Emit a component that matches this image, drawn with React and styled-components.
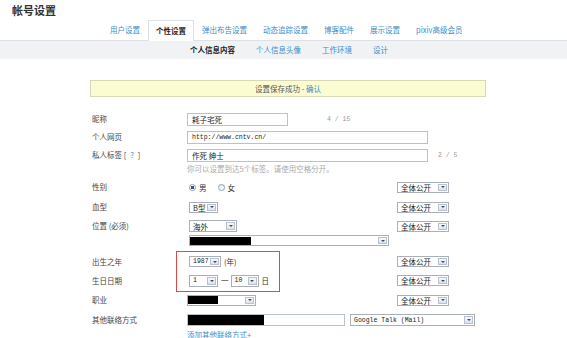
import React from "react";
import styled, { createGlobalStyle } from "styled-components";

const Global = createGlobalStyle`
  html, body { margin: 0; padding: 0; background: #fff; }
  body {
    font-family: "Noto Sans CJK SC", "Noto Sans", sans-serif;
    color: #444;
    width: 567px;
    height: 338px;
    overflow: hidden;
  }
`;

const Page = styled.div`
  width: 567px;
  height: 338px;
  overflow: hidden;
`;

const Title = styled.h1`
  margin: 0;
  padding: 3px 0 0 12px;
  height: 14px;
  font-size: 11px;
  line-height: 14px;
  font-weight: bold;
  color: #333;
`;

const TabBar = styled.div`
  display: flex;
  margin-top: 3px;
  padding-left: 102px;
  height: 20px;
  position: relative;
  z-index: 1;
`;

const Tab = styled.div`
  font-size: 7.5px;
  line-height: 19px;
  padding: 0 ${(p) => (p.$active ? "7px" : "8px")};
  color: ${(p) => (p.$active ? "#222" : "#3c8dc8")};
  font-weight: ${(p) => (p.$active ? "bold" : "normal")};
  background: ${(p) => (p.$active ? "#fff" : "transparent")};
  border: ${(p) => (p.$active ? "1px solid #dde0e4" : "none")};
  border-bottom: none;
  height: ${(p) => (p.$active ? "21px" : "20px")};
  box-sizing: border-box;
  white-space: nowrap;
`;

const SubBar = styled.div`
  display: flex;
  gap: 21px;
  padding-left: 190px;
  height: 19px;
  background: #f1f2f4;
  border-top: 1px solid #dde0e4;
  box-sizing: border-box;
  align-items: center;
`;

const SubTab = styled.div`
  font-size: 7.5px;
  line-height: 10px;
  color: ${(p) => (p.$active ? "#222" : "#3c8dc8")};
  font-weight: ${(p) => (p.$active ? "bold" : "normal")};
  white-space: nowrap;
`;

const Notice = styled.div`
  margin: 21px 0 0 90px;
  width: 396px;
  height: 17px;
  box-sizing: border-box;
  background: #fcfcd2;
  border: 1px solid #d9d8b4;
  font-size: 7.5px;
  line-height: 15px;
  text-align: center;
  color: #555;
`;

const Link = styled.span`
  color: #3c8dc8;
`;

const Form = styled.div`
  margin-top: 13px;
  padding-left: 92px;
  display: flex;
  flex-direction: column;
`;

const Row = styled.div`
  display: flex;
  align-items: ${(p) => (p.$top ? "flex-start" : "center")};
  height: ${(p) => p.$h || 20}px;
  margin-top: ${(p) => p.$mt || 0}px;
`;

const Label = styled.div`
  width: 95px;
  flex: none;
  font-size: 7.5px;
  line-height: ${(p) => (p.$lh ? p.$lh + "px" : "10px")};
  color: #444;
  white-space: nowrap;
`;

const Help = styled.span`
  color: #3c8dc8;
  margin: 0 4px;
`;

const Field = styled.div`
  width: ${(p) => (p.$w ? p.$w + "px" : "210px")};
  flex: none;
  display: flex;
  flex-direction: ${(p) => (p.$col ? "column" : "row")};
  align-items: ${(p) => (p.$col ? "flex-start" : "center")};
  gap: ${(p) => p.$gap || 0}px;
  padding-left: ${(p) => p.$indent || 0}px;
  box-sizing: border-box;
`;

const TextInput = styled.div`
  width: ${(p) => p.$w}px;
  height: ${(p) => p.$h || 13}px;
  box-sizing: border-box;
  border: 1px solid #b9c3ce;
  background: #fff;
  display: flex;
  align-items: center;
  padding-left: ${(p) => (p.$flush ? 0 : 4)}px;
  font-size: ${(p) => (p.$mono ? "6.5px" : "7.5px")};
  font-family: ${(p) =>
    p.$mono ? '"Liberation Mono", monospace' : '"Noto Sans CJK SC", sans-serif'};
  color: #222;
  overflow: hidden;
  white-space: nowrap;
  flex: none;
`;

const Counter = styled.span`
  margin-left: ${(p) => p.$ml || 10}px;
  font-family: "Liberation Mono", monospace;
  font-size: 6.5px;
  color: #999;
  white-space: nowrap;
`;

const Hint = styled.div`
  padding-left: 95px;
  height: 10px;
  font-size: 7.5px;
  line-height: 10px;
  color: #aaa;
  white-space: nowrap;
`;

const SelectBox = styled.div`
  width: ${(p) => p.$w}px;
  height: ${(p) => p.$h || 11}px;
  box-sizing: border-box;
  border: 1px solid #a9b0b8;
  background: #fff;
  display: flex;
  align-items: center;
  flex: none;
  position: relative;
  overflow: hidden;
`;

const SelectText = styled.div`
  flex: 1;
  padding-left: ${(p) => (p.$flush ? 0 : 3)}px;
  font-size: ${(p) => (p.$mono ? "6.5px" : "7.5px")};
  font-family: ${(p) =>
    p.$mono ? '"Liberation Mono", monospace' : '"Noto Sans CJK SC", sans-serif'};
  color: #222;
  white-space: nowrap;
  overflow: hidden;
  display: flex;
  align-items: center;
  height: 100%;
`;

const SelectBtn = styled.div`
  width: 9px;
  height: calc(100% - 2px);
  margin-right: 1px;
  border: 1px solid #b7c1cf;
  background: linear-gradient(#f8f9fb, #dde2ea);
  box-sizing: border-box;
  display: flex;
  align-items: center;
  justify-content: center;
  flex: none;
`;

const Arrow = styled.div`
  width: 0;
  height: 0;
  border-left: 2px solid transparent;
  border-right: 2px solid transparent;
  border-top: 2px solid #3b4c6a;
`;

const Redact = styled.div`
  width: ${(p) => p.$w}px;
  height: ${(p) => p.$h || 8}px;
  background: #000;
  flex: none;
`;

const Select = ({ w, h, mono, flush, children }) => (
  <SelectBox $w={w} $h={h}>
    <SelectText $mono={mono} $flush={flush}>
      {children}
    </SelectText>
    <SelectBtn>
      <Arrow />
    </SelectBtn>
  </SelectBox>
);

const Privacy = () => <Select w={52}>全体公开</Select>;

const RadioGroup = styled.label`
  display: flex;
  align-items: center;
  gap: 3px;
  font-size: 7.5px;
  color: #333;
  margin-right: ${(p) => p.$mr || 0}px;
`;

const RadioDot = styled.span`
  width: 7px;
  height: 7px;
  border-radius: 50%;
  box-sizing: border-box;
  border: 1px solid #8f9db0;
  background: ${(p) =>
    p.$on
      ? "radial-gradient(circle, #2457a6 0 1.6px, #fff 2px)"
      : "linear-gradient(#e9ecf0, #fff)"};
  flex: none;
`;

const Unit = styled.span`
  font-size: 7.5px;
  color: #333;
  margin: 0 2px 0 3px;
  white-space: nowrap;
`;

const Annotated = styled.div`
  position: relative;
  display: flex;
  flex-direction: column;
  margin-top: 5px;
`;

const RedBox = styled.div`
  position: absolute;
  left: 84px;
  top: -1px;
  width: 104px;
  height: 41px;
  box-sizing: border-box;
  border: 1.5px solid #de4a43;
  pointer-events: none;
`;

const AddLink = styled.div`
  padding-left: 95px;
  height: 10px;
  font-size: 7.5px;
  line-height: 10px;
  color: #3c8dc8;
  white-space: nowrap;
`;

const tabs = [
  "用户设置",
  "个性设置",
  "弹出布告设置",
  "动态追踪设置",
  "博客配件",
  "展示设置",
  "pixiv高级会员",
];
const subTabs = ["个人信息内容", "个人信息头像", "工作环境", "设计"];

export default function App() {
  return (
    <Page>
      <Global />
      <Title>帐号设置</Title>
      <TabBar>
        {tabs.map((t, i) => (
          <Tab key={t} $active={i === 1}>
            {t}
          </Tab>
        ))}
      </TabBar>
      <SubBar>
        {subTabs.map((t, i) => (
          <SubTab key={t} $active={i === 0}>
            {t}
          </SubTab>
        ))}
      </SubBar>
      <Notice>
        设置保存成功 - <Link>确认</Link>
      </Notice>
      <Form>
        <Row $h={18}>
          <Label>昵称</Label>
          <Field $w={400}>
            <TextInput $w={101}>耗子宅死</TextInput>
            <Counter $ml={39}>4 / 15</Counter>
          </Field>
        </Row>
        <Row $h={18}>
          <Label>个人网页</Label>
          <Field $w={400}>
            <TextInput $w={241} $mono>
              http://www.cntv.cn/
            </TextInput>
          </Field>
        </Row>
        <Row $h={18}>
          <Label>
            私人标签 [<Help>?</Help>]
          </Label>
          <Field $w={400}>
            <TextInput $w={241}>作死 绅士</TextInput>
            <Counter $ml={10}>2 / 5</Counter>
          </Field>
        </Row>
        <Hint>你可以设置到达5个标签。请使用空格分开。</Hint>
        <Row $mt={3}>
          <Label>性别</Label>
          <Field $indent={2}>
            <RadioGroup $mr={11}>
              <RadioDot $on />男
            </RadioGroup>
            <RadioGroup>
              <RadioDot />女
            </RadioGroup>
          </Field>
          <Privacy />
        </Row>
        <Row>
          <Label>血型</Label>
          <Field $indent={2}>
            <Select w={29}>B型</Select>
          </Field>
          <Privacy />
        </Row>
        <Row $h={30} $top>
          <Label $lh={18}>位置 (必须)</Label>
          <Field $indent={2} $col>
            <Row $h={18}>
              <Select w={48} h={12}>
                海外
              </Select>
            </Row>
            <Select w={200} h={11} flush>
              <Redact $w={61} $h={8} />
            </Select>
          </Field>
          <Row $h={18}>
            <Privacy />
          </Row>
        </Row>
        <Annotated>
          <Row $h={19}>
            <Label>出生之年</Label>
            <Field $indent={2}>
              <Select w={32} mono>
                1987
              </Select>
              <Unit>(年)</Unit>
            </Field>
            <Privacy />
          </Row>
          <Row $h={19}>
            <Label>生日日期</Label>
            <Field $indent={2}>
              <Select w={29} h={12} mono>
                1
              </Select>
              <Unit>一</Unit>
              <Select w={28} h={12} mono>
                10
              </Select>
              <Unit>日</Unit>
            </Field>
            <Privacy />
          </Row>
          <RedBox />
        </Annotated>
        <Row>
          <Label>职业</Label>
          <Field>
            <Select w={69} flush>
              <Redact $w={30} $h={8} />
            </Select>
          </Field>
          <Privacy />
        </Row>
        <Row>
          <Label>其他联络方式</Label>
          <Field $w={300} $gap={5}>
            <TextInput $w={158} $h={12} $flush>
              <Redact $w={76} $h={10} />
            </TextInput>
            <Select w={125} h={12} mono>
              Google Talk (Mail)
            </Select>
          </Field>
        </Row>
        <AddLink>添加其他联络方式+</AddLink>
      </Form>
    </Page>
  );
}
